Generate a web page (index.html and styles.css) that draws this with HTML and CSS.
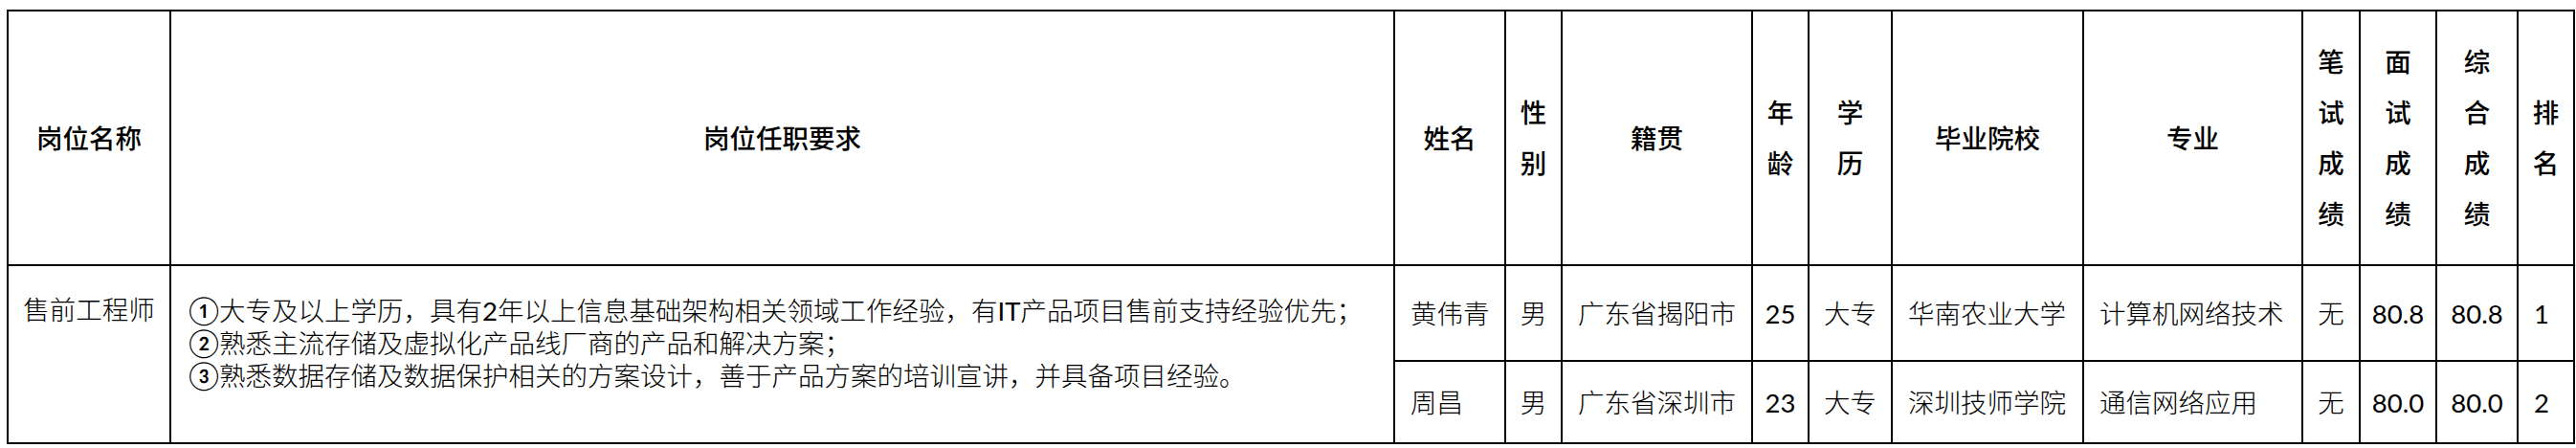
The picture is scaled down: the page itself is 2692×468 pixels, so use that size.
FILE: index.html
```html
<!DOCTYPE html>
<html lang="zh-CN">
<head>
<meta charset="utf-8">
<title>售前工程师</title>
<link rel="stylesheet" href="styles.css">
</head>
<body>
<table class="sheet">
  <colgroup>
    <col class="c-post"><col class="c-req"><col class="c-name"><col class="c-sex"><col class="c-origin"><col class="c-age"><col class="c-edu"><col class="c-school"><col class="c-major"><col class="c-written"><col class="c-interview"><col class="c-total"><col class="c-rank">
  </colgroup>
  <thead>
    <tr class="head">
      <th>岗位名称</th>
      <th>岗位任职要求</th>
      <th>姓名</th>
      <th class="stack">性<br>别</th>
      <th>籍贯</th>
      <th class="stack">年<br>龄</th>
      <th class="stack">学<br>历</th>
      <th>毕业院校</th>
      <th>专业</th>
      <th class="stack">笔<br>试<br>成<br>绩</th>
      <th class="stack">面<br>试<br>成<br>绩</th>
      <th class="stack">综<br>合<br>成<br>绩</th>
      <th class="stack">排<br>名</th>
    </tr>
  </thead>
  <tbody>
    <tr class="r1">
      <td rowspan="2" class="post">售前工程师</td>
      <td rowspan="2" class="req"><span class="circ">①</span>大专及以上学历，具有<span class="num">2</span>年以上信息基础架构相关领域工作经验，有<span class="num">IT</span>产品项目售前支持经验优先；<br><span class="circ">②</span>熟悉主流存储及虚拟化产品线厂商的产品和解决方案；<br><span class="circ">③</span>熟悉数据存储及数据保护相关的方案设计，善于产品方案的培训宣讲，并具备项目经验。</td>
      <td class="l">黄伟青</td>
      <td class="c">男</td>
      <td class="l">广东省揭阳市</td>
      <td class="c num">25</td>
      <td class="c">大专</td>
      <td class="l">华南农业大学</td>
      <td class="l">计算机网络技术</td>
      <td class="c">无</td>
      <td class="c num">80.8</td>
      <td class="c num">80.8</td>
      <td class="l num">1</td>
    </tr>
    <tr class="r2">
      <td class="l">周昌</td>
      <td class="c">男</td>
      <td class="l">广东省深圳市</td>
      <td class="c num">23</td>
      <td class="c">大专</td>
      <td class="l">深圳技师学院</td>
      <td class="l">通信网络应用</td>
      <td class="c">无</td>
      <td class="c num">80.0</td>
      <td class="c num">80.0</td>
      <td class="l num">2</td>
    </tr>
  </tbody>
</table>
</body>
</html>
```

FILE: styles.css
```css
html, body {
  margin: 0;
  background: #ffffff;
}
body {
  padding: 10px 0 0 7px;
}
.sheet {
  border-collapse: collapse;
  table-layout: fixed;
  width: 2684px;
  font-family: Lato, "Noto Sans CJK SC", sans-serif;
  font-size: 27.5px;
  color: #000;
}
.sheet th,
.sheet td {
  border: 2px solid #000;
  padding: 0;
  overflow: hidden;
  white-space: nowrap;
}
.sheet th {
  font-weight: 500;
  text-align: center;
  vertical-align: middle;
  line-height: 53px;
}
.sheet td {
  font-weight: 300;
  vertical-align: middle;
  line-height: 33px;
}
.c-post { width: 170px; }
.c-req { width: 1279px; }
.c-name { width: 116px; }
.c-sex { width: 59px; }
.c-origin { width: 199px; }
.c-age { width: 59px; }
.c-edu { width: 87px; }
.c-school { width: 200px; }
.c-major { width: 229px; }
.c-written { width: 60px; }
.c-interview { width: 80px; }
.c-total { width: 85px; }
.c-rank { width: 59px; }

.head { height: 266px; }
.r1 { height: 100px; }
.r2 { height: 86px; }

.sheet td.post {
  vertical-align: top;
  text-align: center;
  padding-top: 29px;
}
.sheet td.req {
  vertical-align: top;
  text-align: left;
  padding: 29px 0 0 18px;
}
.sheet td.l {
  text-align: left;
  padding-left: 16px;
}
.sheet td.c {
  text-align: center;
}
.num {
  font-weight: 400;
}
.sheet td.num {
  font-weight: 400;
}
.circ {
  font-size: 29px;
  font-weight: 400;
}
```
